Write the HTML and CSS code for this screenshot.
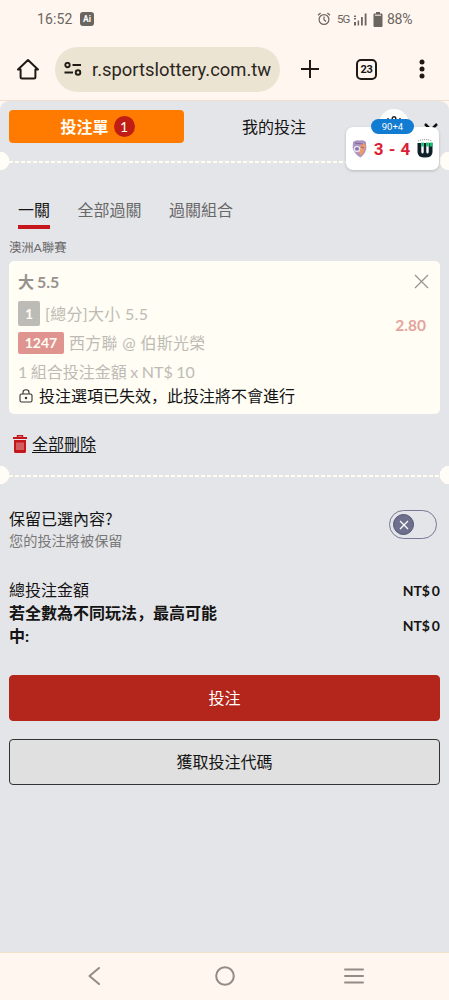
FILE: index.html
```html
<!DOCTYPE html>
<html lang="zh-Hans">
<head>
<meta charset="utf-8">
<title>投注單</title>
<link rel="stylesheet" href="styles.css">
</head>
<body>
<header class="status">
  <span class="clock">16:52</span><span class="ai">Ai</span>
  <svg class="alarm" width="14" height="14" viewBox="0 0 14 14" fill="none" stroke="#6b6560" stroke-width="1.2"><circle cx="7" cy="7.5" r="4.9"/><path d="M7 4.5v3.2l2 1.800M1 3.300 3.600 1M13 3.300 10.400 1"/></svg>
  <span class="net">5G</span>
  <svg class="signal" width="14" height="13" viewBox="0 0 14 13" fill="#6b6560"><path d="M.7 4 2 1.800 3.300 4zM.7 5 2 7.200 3.300 5zM1 9h2v3.500H1zM4.600 7.500h1.500v5H4.600zM8 4h1.800v8.500H8zM11.700 .5h1.800v12h-1.800z"/></svg>
  <svg class="battery" width="10" height="15" viewBox="0 0 10 15"><path d="M3 0h4v1.500h1.500q1 0 1 1V14q0 1-1 1h-7q-1 0-1-1V2.500q0-1 1-1H3z" fill="#6b6560"/><path d="M2 3.200h6" stroke="#fff6ef"/></svg>
  <span class="percent">88%</span>
</header>
<nav class="toolbar">
  <svg class="home" width="22" height="22" viewBox="0 0 22 22" fill="none" stroke="#1f1b14" stroke-width="2" stroke-linejoin="round"><path d="M1 11.500h2.600V19q0 1.500 1.500 1.500h11.800q1.500 0 1.500-1.500v-7.500H21L11 2z"/></svg>
  <div class="address">
    <svg width="18" height="14" viewBox="0 0 18 14" fill="none" stroke="#1f1b14" stroke-width="1.900"><circle cx="3.500" cy="3" r="2.200"/><path d="M8.500 3H17M.5 10.500H9"/><circle cx="14" cy="10.500" r="2.300"/></svg>
    <span>r.sportslottery.com.tw</span>
  </div>
  <svg class="plus" width="18" height="18" viewBox="0 0 18 18" stroke="#1f1b14" stroke-width="2"><path d="M9 0v18M0 9h18"/></svg>
  <span class="count">23</span>
  <svg class="dots" width="6" height="20" viewBox="0 0 6 20" fill="#1f1b14"><circle cx="3" cy="3" r="2.500"/><circle cx="3" cy="10" r="2.500"/><circle cx="3" cy="17" r="2.500"/></svg>
</nav>
<main class="page">
  <div class="switcher">
    <div class="slip">投注單<span class="badge">1</span></div>
    <div class="mine">我的投注</div>
  </div>
  <div class="rule"></div>
  <div class="tabs"><span class="tab active">一關</span><span class="tab">全部過關</span><span class="tab">過關組合</span></div>
  <div class="league">澳洲A聯賽</div>
  <section class="card">
    <div class="head"><b>大 5.5</b><svg width="15" height="15" viewBox="0 0 15 15" stroke="#96938e" stroke-width="1.200"><path d="m1 1 13 13M14 1 1 14"/></svg></div>
    <div class="body">
      <div>
        <div class="line first"><span class="tag">1</span>[總分]大小 5.5</div>
        <div class="line second"><span class="tag red">1247</span>西方聯 @ 伯斯光榮</div>
      </div>
      <span class="odds">2.80</span>
    </div>
    <div class="stake">1 組合投注金額 x NT$ 10</div>
    <div class="expired"><svg width="14" height="14" viewBox="0 0 14 14" fill="none" stroke="#333" stroke-width="1.100"><rect x="1" y="5" width="12" height="8" rx="1.500"/><path d="M4 5V3.500q0-2.700 3-2.700t3 2.700V5"/><circle cx="7" cy="9" r=".7" fill="#333"/></svg>投注選項已失效，此投注將不會進行</div>
  </section>
  <div class="clear">
    <svg width="14" height="18" viewBox="0 0 14 18"><path d="M4.500 2V.7h5V2" fill="none" stroke="#c5161b" stroke-width="1.400"/><path d="M0 2h14v2H0zM1 5h12v11.500q0 1.500-1.500 1.500h-9Q1 18 1 16.500z" fill="#c5161b"/><path d="M4 7.500v7.500M6 7.500v7.500M8 7.500v7.500M10 7.500v7.500" stroke="#eac6c8" stroke-width=".8"/></svg>
    <u>全部刪除</u>
  </div>
  <div class="rule"></div>
  <div class="keep">
    <div><div class="question">保留已選內容?</div><div class="hint">您的投注將被保留</div></div>
    <div class="toggle"><span class="knob"><svg width="10" height="10" viewBox="0 0 10 10" stroke="#fff" stroke-width="1.200"><path d="m1 1 8 8M9 1 1 9"/></svg></span></div>
  </div>
  <div class="total"><span>總投注金額</span><b>NT$ 0</b></div>
  <div class="total max"><strong>若全數為不同玩法，最高可能中:</strong><b>NT$ 0</b></div>
  <div class="button primary">投注</div>
  <div class="button">獲取投注代碼</div>
  <div class="bubble"><svg width="16" height="8" viewBox="0 0 16 8" fill="none" stroke="#222" stroke-width="1.400"><circle cx="8" cy="2.500" r="1.800"/><path d="M2 2v3M14 2v3"/></svg></div>
  <svg class="chevron" width="14" height="9" viewBox="0 0 14 9" fill="none" stroke="#111" stroke-width="2.500"><path d="m1 1 6 6 6-6"/></svg>
  <aside class="score">
    <svg width="15" height="18" viewBox="0 0 15 18"><path d="M1 2Q4-.5 7.500.5 12-.5 14 2l.4 6Q14 13 8.500 17.500 2 14 .7 8z" fill="#a994c3"/><path d="M9 3q4 0 4.500 2.500L13 9q-1 4-5 7l-1-5z" fill="#f09a65"/><circle cx="5" cy="9" r="3.300" fill="#e8e2f2"/><path d="m3 8 2-1 2 1-.5 2.500h-3z" fill="#8b75ab"/><path d="m3 3 8 1M9 7l3 1" stroke="#8069a0" stroke-width="1.200"/></svg>
    <span>3 - 4</span>
    <svg width="16" height="19" viewBox="0 0 16 19"><path d="M1 2Q8-.8 15 2" fill="none" stroke="#777" stroke-dasharray="1 1"/><path d="M.5 4h3.800v9q.2 1.500 1.200 1.500T6.700 13V4h2.600v9q.2 1.500 1.200 1.500t1.200-1.500V4h3.800v9q0 5.500-7.500 5.500T.5 13z" fill="#10202a"/><path d="M4.300 3.500h2.400v4H4.300zM9.300 3.500h2.400v4H9.300zM12.500 3.500h3v4h-3z" fill="#1bbf72"/></svg>
    <span class="minute">90+4</span>
  </aside>
</main>
<footer class="nav">
  <svg width="12" height="18" viewBox="0 0 12 18"><path d="M11 1 1.500 9 11 17"/></svg>
  <svg width="20" height="20" viewBox="0 0 20 20"><circle cx="10" cy="10" r="8.800"/></svg>
  <svg width="20" height="16" viewBox="0 0 20 16"><path d="M1 1.500h18M1 8h18M1 14.500h18"/></svg>
</footer>
</body>
</html>
```

FILE: styles.css
```css
* { box-sizing: border-box; }
body {
  margin: 0; width: 449px; height: 1000px; overflow: hidden;
  display: flex; flex-direction: column; background: #fff6ef; color: #141414;
  font: 16px/23px Lato, "Noto Sans CJK SC", sans-serif;
}
svg { display: block; flex: none; }
.status {
  height: 38px; display: flex; align-items: center; padding-left: 37px;
  font-family: Roboto, sans-serif; color: #6b6560; font-size: 14px;
}
.clock { width: 43px; font-size: 14px; letter-spacing: .1px; }
.ai { width: 14px; height: 14px; border-radius: 3px; background: #6b6560; color: #fff; font: bold 8.500px/14px Roboto, sans-serif; text-align: center; }
.alarm { margin-left: 223px; }
.net { width: 13px; margin-left: 6px; font-size: 11.500px; letter-spacing: -1px; }
.signal { margin-left: 3px; }
.battery { margin-left: 6px; }
.percent { margin-left: 4px; letter-spacing: -.3px; }
.toolbar { height: 63px; display: flex; align-items: center; padding-left: 17px; border-bottom: 1px solid #f2dfcd; flex: none; }
.address {
  width: 225px; height: 45px; margin-left: 16px; padding-left: 9px; border-radius: 23px;
  background: #ece4d3; display: flex; align-items: center; gap: 10px;
  font: 18.400px Roboto, sans-serif; color: #2b261d; white-space: nowrap;
}
.plus { margin-left: 21px; }
.count { width: 21px; height: 21px; margin-left: 37px; border: 2px solid #1f1b14; border-radius: 5px; font: bold 11px/17px Roboto, sans-serif; letter-spacing: -.4px; text-align: center; }
.dots { margin-left: 42px; }
.page { position: relative; flex: 1; padding: 9px 9px 0; background: #e4e5e8; border-radius: 9px 9px 0 0; overflow: hidden; }
.switcher { display: flex; height: 33px; line-height: 33px; }
.slip { width: 175px; border-radius: 4px; background: #ff7b00; color: #fffdf5; font-weight: 700; display: flex; align-items: center; justify-content: center; gap: 5px; padding-left: 2px; }
.badge { width: 21px; height: 21px; border-radius: 50%; background: #c01d14; font: 14px/21px Lato, sans-serif; text-align: center; }
.mine { margin-left: 58px; }
.rule {
  height: 18px; margin: 9px -9px 0;
  background: radial-gradient(circle at 0 9px, #fffdf5 9px, transparent 9.500px), radial-gradient(circle at 100% 9px, #fffdf5 9px, transparent 9.500px),
    repeating-linear-gradient(90deg, #fffdf0 0 4px, transparent 4px 6px) 9px 9px / 431px 2px no-repeat;
}
.tabs { display: flex; gap: 28px; margin: 27px 0 0 9px; height: 32px; color: #686868; }
.tab { height: 32px; line-height: 26px; }
.tab + .tab { margin-left: -.5px; }
.active { border-bottom: 4px solid #c5161b; color: #141414; }
.league { height: 32px; padding-top: 7px; color: #686868; font-size: 12.300px; }
.card { height: 153px; padding: 9px 9px 0; border-radius: 5px; background: #fffdf4; color: #bebbb5; }
.head { height: 31px; display: flex; justify-content: space-between; padding: 0 3px 0 0; color: #96938e; }
.head svg { margin: 4px -1px 0 0; }
.head b { font-weight: 700; word-spacing: -1px; }
.body { display: flex; justify-content: space-between; height: 59px; }
.line { display: flex; align-items: center; gap: 5px; }
.first { height: 25px; letter-spacing: .3px; }
.second { height: 23px; margin-top: 5px; letter-spacing: .3px; }
.tag { width: 22px; height: 25px; border-radius: 2px; background: #bcbbb6; color: #fffdf4; font: bold 14px/25px Lato, sans-serif; text-align: center; letter-spacing: 0; }
.red { width: 46px; height: 22px; line-height: 22px; background: #df948f; }
.odds { margin: 13px 5px 0 0; font-weight: 700; color: #e5a39d; font-size: 15.500px; }
.stake { height: 24px; line-height: 24px; word-spacing: -.6px; }
.expired { display: flex; align-items: center; gap: 6px; padding-left: 1px; height: 23px; color: #141414; }
.clear { display: flex; align-items: center; gap: 5px; height: 43px; margin-top: 8px; padding-left: 4px; }
.clear + .rule { margin-top: 1px; }
.clear u { text-underline-offset: 2px; text-decoration-thickness: 1px; }
.keep { display: flex; justify-content: space-between; height: 94px; padding-top: 23px; }
.question { height: 23px; font-family: "Noto Sans CJK SC", sans-serif; }
.hint { height: 22px; line-height: 22px; font-size: 14.200px; color: #777; }
.toggle { width: 48px; height: 29px; margin: 3px 3px 0 0; padding: 3px; border: 1px solid #777797; border-radius: 15px; }
.knob { width: 21px; height: 21px; border-radius: 50%; background: #6e6f8c; border: 1px solid #505174; display: grid; place-items: center; }
.total { display: flex; justify-content: space-between; align-items: center; height: 23px; }
.total b { font-size: 14px; word-spacing: -1.500px; padding-top: 1px; }
.max { height: 47px; }
.max strong { width: 216px; line-height: 23px; margin-top: -2px; }
.button { height: 46px; border: 1px solid #333; border-radius: 4px; background: #e0e0e0; text-align: center; line-height: 44px; margin-top: 18px; }
.primary { margin-top: 27px; background: #b4261b; border-color: #b4261b; color: #fff; }
.bubble { position: absolute; left: 379px; top: 8px; width: 30px; height: 30px; border-radius: 50%; background: #fff; padding: 7px; }
.chevron { position: absolute; left: 424px; top: 22px; }
.score { position: absolute; left: 346px; top: 26px; width: 93px; height: 43px; padding: 0 6px; display: flex; align-items: center; justify-content: space-between; border-radius: 7px; background: #fff; box-shadow: 0 1px 3px #0003; font: bold 17px Roboto, sans-serif; word-spacing: 1px; color: #d91e35; }
.minute { position: absolute; left: 25px; top: -8px; width: 43px; height: 15px; border-radius: 8px; background: #127bd2; color: #fff; font: 9.500px/15px Roboto, sans-serif; text-align: center; }
.nav { height: 48px; flex: none; border-top: 1px solid #f0e1cc; display: flex; align-items: center; padding: 0 0 2px 88px; gap: 115px; }
.nav svg { fill: none; stroke: #918c86; stroke-width: 2; stroke-linecap: round; stroke-linejoin: round; }
.nav svg:last-child { margin-left: -6px; }
```
